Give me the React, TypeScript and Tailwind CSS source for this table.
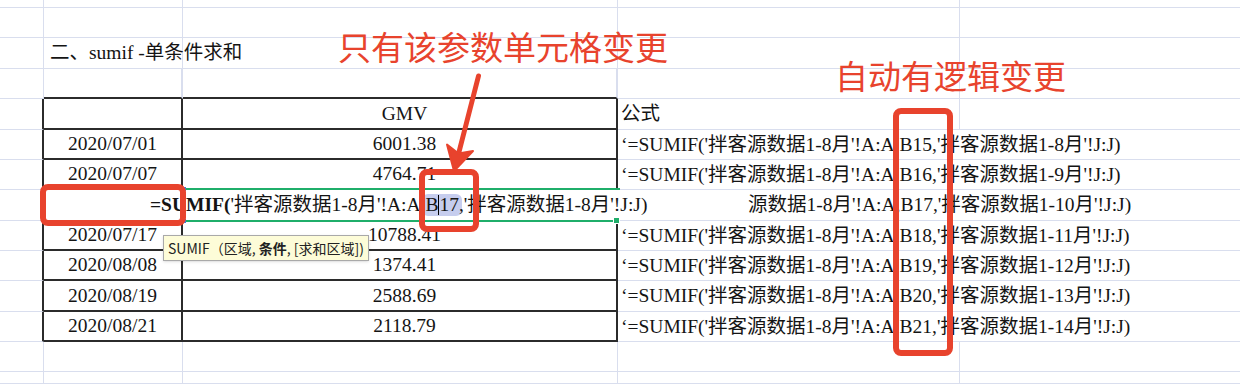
import React from 'react';
import clsx from 'clsx';

const COL_W = ['w-[44px]', 'w-[139px]', 'w-[435px]', 'w-[342px]', 'w-[280px]'];
const ROW_H = [
  'h-[8px]', 'h-[30px]', 'h-[31px]', 'h-[30px]', 'h-[31px]', 'h-[30px]', 'h-[30px]',
  'h-[31px]', 'h-[30px]', 'h-[30px]', 'h-[31px]', 'h-[30px]', 'h-[30px]', 'h-[12px]',
];

const LIGHT = 'border-r border-b border-[#d9deee]';
const DARK = 'border-r-2 border-b-2 border-[#2b2b2b]';

const data = [
  { date: '2020/07/01', gmv: '6001.38', ref: 'B15', month: '1-8月' },
  { date: '2020/07/07', gmv: '4764.71', ref: 'B16', month: '1-9月' },
  { date: '', gmv: '', ref: 'B17', month: '1-10月' },
  { date: '2020/07/17', gmv: '10788.41', ref: 'B18', month: '1-11月' },
  { date: '2020/08/08', gmv: '1374.41', ref: 'B19', month: '1-12月' },
  { date: '2020/08/19', gmv: '2588.69', ref: 'B20', month: '1-13月' },
  { date: '2020/08/21', gmv: '2118.79', ref: 'B21', month: '1-14月' },
];

const formula = (ref: string, month: string) =>
  `‘=SUMIF('拌客源数据1-8月'!A:A,${ref},'拌客源数据${month}'!J:J)`;

interface CellProps {
  col: number;
  className?: string;
  children?: React.ReactNode;
}

const Cell: React.FC<CellProps> = ({ col, className, children }) => (
  <div className={clsx('shrink-0 h-full flex items-center whitespace-nowrap', COL_W[col], className)}>
    {children}
  </div>
);

// one sheet row; table rows get the dark borders on the first columns
const Row = ({ index }: { index: number }) => {
  const inTable = index >= 4 && index <= 11;
  const item = index >= 5 && index <= 11 ? data[index - 5] : null;
  const editing = index === 7;

  return (
    <div className={clsx('flex', ROW_H[index])}>
      <Cell
        col={0}
        className={inTable ? 'border-b border-b-[#d9deee] border-r-2 border-r-[#2b2b2b]' : LIGHT}
      />
      <Cell col={1} className={clsx(inTable || index === 3 ? DARK : LIGHT, index === 3 && 'border-r-[#d9deee] border-r')}>
        {index === 2 && <span className="pl-[6px]">二、sumif -单条件求和</span>}
        {item && <span className="w-full text-center">{item.date}</span>}
      </Cell>
      <Cell
        col={2}
        className={clsx(inTable || index === 3 ? DARK : LIGHT, index === 3 && 'border-r-[#d9deee] border-r', 'justify-center pl-[10px]')}
      >
        {index === 4 && 'GMV'}
        {item && item.gmv}
      </Cell>
      <Cell
        col={3}
        className={clsx(item ? 'border-b border-[#d9deee]' : LIGHT, editing ? 'pl-[130px]' : 'pl-[3px]')}
      >
        {index === 4 && '公式'}
        {item && !editing && formula(item.ref, item.month)}
        {/* the start of this one sits under the open editor */}
        {editing && `源数据1-8月'!A:A,${item.ref},'拌客源数据${item.month}'!J:J)`}
      </Cell>
      <Cell col={4} className="border-b border-[#d9deee]" />
    </div>
  );
};

const RED = '#e8432d';

export default function App() {
  return (
    <div className="relative w-[1240px] h-[384px] overflow-hidden bg-white text-[#141414] text-[19.5px] leading-none font-['Liberation_Serif','Noto_Sans_CJK_SC',serif]">
      <div className="flex flex-col">
        {ROW_H.map((_, i) => (
          <Row key={i} index={i} />
        ))}
      </div>

      {/* in-cell editor of the B17 row */}
      <div className="absolute left-[44px] top-[190px] w-[702px] h-[30px] bg-white flex items-center pl-[106px] whitespace-nowrap">
        <span className="font-bold">=SUMIF(</span>
        <span>'拌客源数据1-8月'!A:A,</span>
        <span className="inline-flex items-center h-[22px] px-[3px] -mx-[3px] rounded-[6px] bg-[#c6cdee]">
          B<span className="inline-block w-0 h-[20px] border-l border-black" />17
        </span>
        <span>,'拌客源数据1-8月'!J:J)</span>
      </div>
      <div className="absolute left-[185px] top-[188px] w-[435px] h-[34px] border-t-2 border-b-2 border-[#1fae6a]" />
      <div className="absolute left-[613px] top-[217px] w-[7px] h-[7px] bg-[#1fae6a] border border-white" />
      <div className="absolute left-[184px] top-[187px] w-[2px] h-[4px] bg-[#3b7de0]" />
      <div className="absolute left-[184px] top-[219px] w-[2px] h-[4px] bg-[#3b7de0]" />

      {/* function hint */}
      <div className="absolute left-[163px] top-[235px] h-[26px] px-[4px] flex items-center whitespace-pre border border-[#a9a9a9] bg-[#fdfcd8] shadow-sm text-[14px] text-[#222] font-['Noto_Sans_CJK_SC','Noto_Sans',sans-serif]">
        <span>SUMIF（区域, </span>
        <b className="font-bold">条件</b>
        <span>, [求和区域])</span>
      </div>

      {/* annotations */}
      <div className="absolute left-[338px] top-[30px] text-[33px] leading-none text-[#e8432d] font-['Noto_Sans_CJK_SC',sans-serif]">
        只有该参数单元格变更
      </div>
      <div className="absolute left-[835px] top-[59px] text-[33px] leading-none text-[#e8432d] font-['Noto_Sans_CJK_SC',sans-serif]">
        自动有逻辑变更
      </div>

      <div className="absolute left-[40px] top-[184px] w-[146px] h-[42px] rounded-[8px] border-[6px] border-[#e8432d]" />
      <div className="absolute left-[419px] top-[169px] w-[60px] h-[63px] rounded-[8px] border-[6px] border-[#e8432d]" />
      <div className="absolute left-[893px] top-[108px] w-[60px] h-[248px] rounded-[8px] border-[6px] border-[#e8432d]" />

      <svg className="absolute inset-0 pointer-events-none" width="1240" height="384">
        <path d="M478.5 76 L459 152" stroke={RED} strokeWidth="5" strokeLinecap="round" />
        <path d="M447 144.5 L454 171 L473 151 L458.5 153.5 Z" fill={RED} stroke={RED} strokeWidth="2" strokeLinejoin="round" />
      </svg>
    </div>
  );
}
